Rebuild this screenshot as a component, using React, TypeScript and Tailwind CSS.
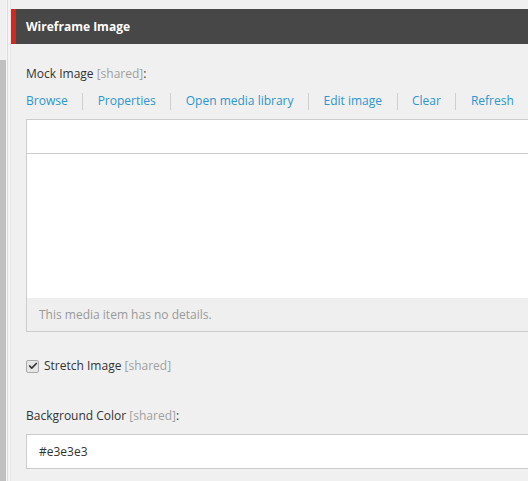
import { Check } from "lucide-react"

const links = ["Browse", "Properties", "Open media library", "Edit image", "Clear", "Refresh"]

const Shared = () => <span className="text-[#a0a0a0]">[shared]</span>

export default function App() {
  return (
    <div
      className="flex h-[481px] w-[528px] overflow-hidden bg-[#f0f0f0] text-[12px] text-[#333]"
      style={{ fontFamily: '"Open Sans", "Segoe UI", sans-serif' }}
    >
      {/* left rail */}
      <div className="flex w-[6px] shrink-0 flex-col">
        <div className="h-[60px] bg-[#f0f0f0]" />
        <div className="flex-1 bg-[#c0c0c0]" />
      </div>
      <div className="w-[1px] shrink-0 bg-[#f7f7f7]" />
      <div className="w-[1px] shrink-0 bg-[#dcdcdc]" />
      <div className="w-[2px] shrink-0 bg-[#f4f4f4]" />
      <div className="w-[1px] shrink-0 bg-[#e6e6e6]" />

      <div className="flex min-w-0 flex-1 flex-col pt-[9px]">
        <div className="flex h-[35px] shrink-0 items-center bg-[#474747]">
          <div className="h-full w-[5px] bg-[#d3281e]" />
          <span className="pl-[10px] text-[12px] font-bold text-white">Wireframe Image</span>
        </div>

        <div className="flex flex-col pl-[15px]">
          <div className="mt-[21px] leading-[18px]">
            Mock Image <Shared />:
          </div>

          <div className="mt-[9px] flex items-center whitespace-nowrap text-[#2b96d0]">
            {links.map((l, i) => (
              <div key={l} className="flex items-center">
                {i > 0 && <div className="mx-[14.5px] h-[17px] w-px bg-[#cfcfcf]" />}
                <span className="leading-[18px]">{l}</span>
              </div>
            ))}
          </div>

          <div className="mt-[9px] flex w-[600px] flex-col border border-[#cccccc]">
            <div className="h-[34px] border-b border-[#cccccc] bg-white" />
            <div className="h-[144px] bg-white" />
            <div className="flex h-[33px] items-center bg-[#efefef] pl-[12px] text-[#9a9a9a]">
              This media item has no details.
            </div>
          </div>

          <label className="mt-[25px] flex items-center gap-[5px]">
            <span className="flex h-[13px] w-[13px] items-center justify-center rounded-[2px] border border-[#a9a9a9] bg-[#e6e6e6]">
              <Check className="h-[10px] w-[10px] text-[#333]" strokeWidth={4} />
            </span>
            <span className="leading-[18px]">
              Stretch Image <Shared />
            </span>
          </label>

          <div className="mt-[32px] leading-[18px]">
            Background Color <Shared />:
          </div>

          <div className="mt-[9px] flex h-[35px] w-[600px] items-center border border-[#cccccc] bg-white pl-[12px]">
            #e3e3e3
          </div>
        </div>
      </div>
    </div>
  )
}
